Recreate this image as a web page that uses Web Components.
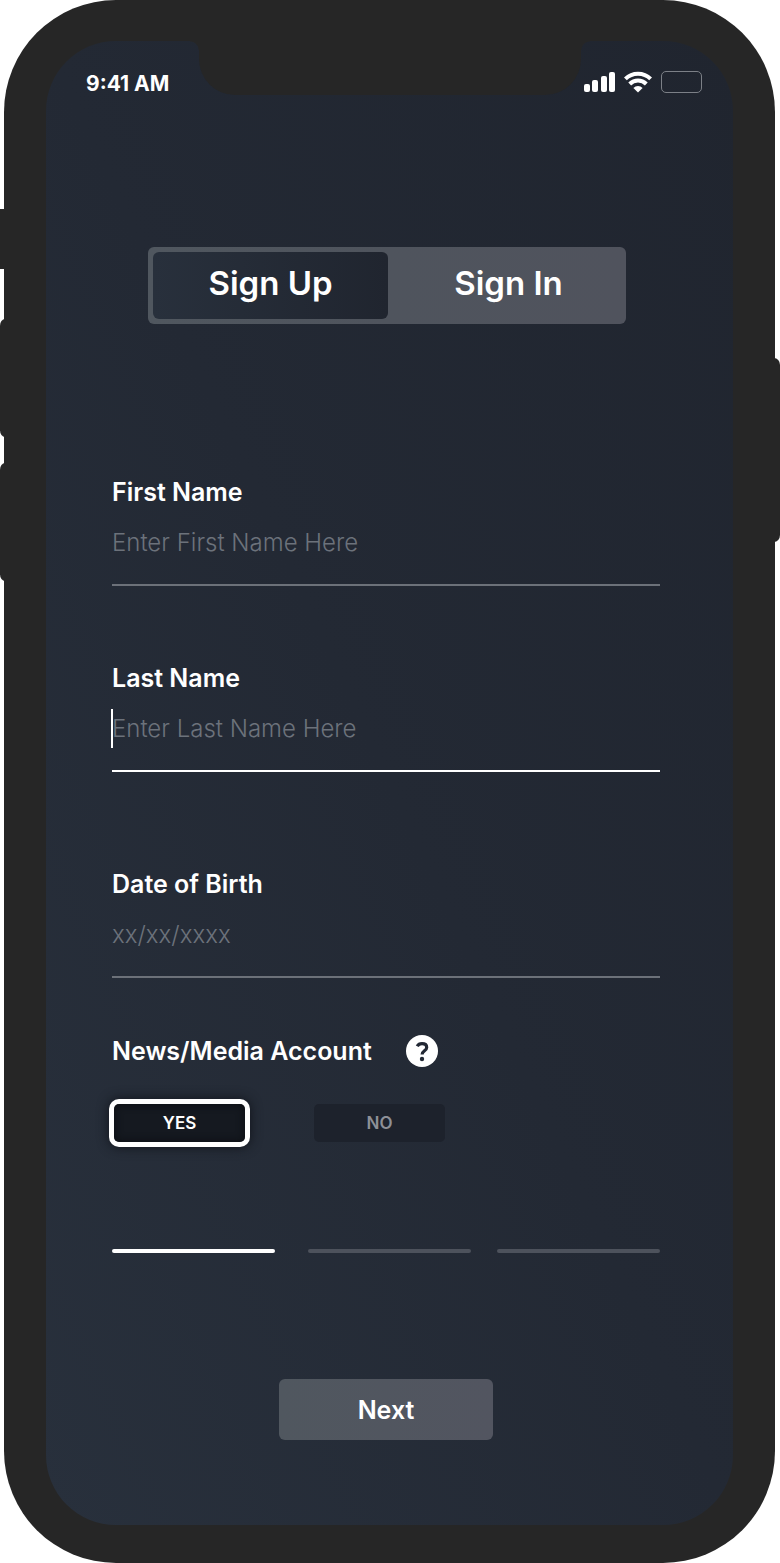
<!DOCTYPE html>
<html lang="en">
<head>
<meta charset="utf-8">
<meta name="viewport" content="width=device-width, initial-scale=1">
<title>Sign Up</title>
<style>
  body {
    margin: 0;
    background-color: #ffffff;
    color: #ffffff;
    font-family: Inter, "Liberation Sans", sans-serif;
  }
</style>
</head>
<body>
<phone-frame>
  <status-bar slot="status" time="9:41 AM"></status-bar>
  <sign-up-form></sign-up-form>
</phone-frame>

<script>
class PhoneFrame extends HTMLElement {
  constructor() {
    super();
    this.shadowDOM = this.attachShadow({mode: 'open'});
  }

  connectedCallback() {
    this.render();
  }

  render() {
    this.shadowDOM.innerHTML = `
    <style>
      * {
        box-sizing: border-box;
      }
      :host {
        display: block;
        position: relative;
        margin: 0 5px 0 4px;
        padding: 41px 42px 38px;
        border-radius: 112px;
        background-color: #262626;
      }

      .screen {
        position: relative;
        border-radius: 70px;
        background: linear-gradient(to top right, #28303c, #232934 50%, #20252f);
      }

      /* notch with rounded outer shoulders */
      .notch {
        position: absolute;
        top: 0;
        left: 50%;
        width: 382px;
        height: 54px;
        margin-left: -191px;
        border-radius: 0 0 36px 36px;
        background-color: #262626;
      }
      .notch::before,
      .notch::after {
        content: "";
        position: absolute;
        top: 0;
        width: 9px;
        height: 9px;
      }
      .notch::before {
        left: -9px;
        background: radial-gradient(circle at 0 100%, transparent 8px, #262626 9px);
      }
      .notch::after {
        right: -9px;
        background: radial-gradient(circle at 100% 100%, transparent 8px, #262626 9px);
      }

      /* side keys, over the page edge */
      .key {
        position: absolute;
        left: -4px;
        width: 5px;
        border-radius: 6px 0 0 6px / 8px 0 0 8px;
        background-color: #262626;
      }
      .mute { top: 209px; height: 60px; border-radius: 0; }
      .up { top: 319px; height: 118px; }
      .down { top: 463px; height: 118px; }
      .power {
        left: auto;
        right: -5px;
        top: 358px;
        width: 6px;
        height: 184px;
        border-radius: 0 6px 6px 0 / 0 7px 7px 0;
      }
    </style>

    <div class="key mute"></div>
    <div class="key up"></div>
    <div class="key down"></div>
    <div class="key power"></div>
    <div class="screen">
      <div class="notch"></div>
      <slot name="status"></slot>
      <slot></slot>
    </div>
    `;
  }
}

customElements.define('phone-frame', PhoneFrame);

class StatusBar extends HTMLElement {
  constructor() {
    super();
    this.shadowDOM = this.attachShadow({mode: 'open'});
  }

  connectedCallback() {
    this.render();
  }

  render() {
    this.shadowDOM.innerHTML = `
    <style>
      :host {
        display: flex;
        align-items: center;
        justify-content: space-between;
        height: 30px;
        padding: 28px 31px 0 40px;
        font-size: 21px;
        font-weight: 700;
        line-height: 30px;
      }
      .icons {
        display: flex;
        align-items: center;
        gap: 9px;
        padding-bottom: 4px;
      }
      svg {
        display: block;
      }
    </style>

    <span>${this.getAttribute('time')}</span>
    <div class="icons">
      <svg width="31" height="22" viewBox="0 0 31 22" fill="#ffffff">
        <rect x="0" y="13" width="6" height="8" rx="2"/>
        <rect x="8" y="9" width="6" height="12" rx="2"/>
        <rect x="17" y="5" width="6" height="16" rx="2"/>
        <rect x="25" y="1" width="6" height="20" rx="2"/>
      </svg>
      <svg width="28" height="22" viewBox="0 0 28 22" fill="none" stroke="#ffffff" stroke-width="4">
        <path d="M1.4 7.9a18 18 0 0 1 25.2 0"/>
        <path d="M5.7 13a11.8 11.8 0 0 1 16.6 0"/>
        <path d="M9.4 17a6.5 6.5 0 0 1 9.2 0L14 21.5Z" fill="#ffffff" stroke="none"/>
      </svg>
      <svg width="41" height="22" viewBox="0 0 41 22" fill="none" stroke="#7c8087">
        <rect x="0.5" y="0.5" width="40" height="21" rx="4.5"/>
      </svg>
    </div>
    `;
  }
}

customElements.define('status-bar', StatusBar);

class TabSwitch extends HTMLElement {
  constructor() {
    super();
    this.shadowDOM = this.attachShadow({mode: 'open'});
  }

  connectedCallback() {
    this.render();
  }

  _handleClick = (event) => {
    this.shadowDOM.querySelectorAll('button').forEach((button) => {
      button.setAttribute('aria-selected', button === event.currentTarget);
    });
  }

  render() {
    this.shadowDOM.innerHTML = `
    <style>
      :host {
        display: flex;
        gap: 3px;
        padding: 5px 0 5px 5px;
        border-radius: 6px;
        background: linear-gradient(to right, #50575f, #4f545d 50%, #50535d);
      }
      button {
        flex: 1;
        height: 67px;
        margin: 0;
        padding: 0 0 6px;
        border: none;
        border-radius: 6px;
        background: none;
        color: inherit;
        font: 600 33px/40px Inter, "Liberation Sans", sans-serif;
      }
      button[aria-selected="true"] {
        background: linear-gradient(to right, #28303c, #20252f);
      }
    </style>

    <button type="button" role="tab" aria-selected="true">Sign Up</button>
    <button type="button" role="tab" aria-selected="false">Sign In</button>
    `;

    this.shadowDOM.querySelectorAll('button').forEach((button) => {
      button.addEventListener('click', this._handleClick);
    });
  }
}

customElements.define('tab-switch', TabSwitch);

class FormField extends HTMLElement {
  constructor() {
    super();
    this.shadowDOM = this.attachShadow({mode: 'open'});
  }

  connectedCallback() {
    this.render();
  }

  get value() {
    return this.shadowDOM.querySelector('#field').value;
  }

  render() {
    this.shadowDOM.innerHTML = `
    <style>
      :host {
        display: block;
      }
      label {
        display: block;
        font-size: 25px;
        font-weight: 600;
        line-height: 32px;
      }
      .box {
        position: relative;
        padding: 16px 0 22px;
        border-bottom: 2px solid #6c7179;
      }
      input {
        display: block;
        box-sizing: border-box;
        width: 100%;
        height: 38px;
        margin: 0;
        padding: 0;
        border: none;
        outline: none;
        background: none;
        color: inherit;
        font: 300 24px/38px Inter, "Liberation Sans", sans-serif;
      }
      input::placeholder {
        color: #6c727b;
        opacity: 1;
      }
      :host([active]) .box {
        border-color: #ffffff;
      }
      :host([active]) .box::before {
        content: "";
        position: absolute;
        left: -1px;
        top: 15px;
        width: 2px;
        height: 39px;
        background-color: #ffffff;
      }
    </style>

    <label for="field">${this.getAttribute('label')}</label>
    <div class="box">
      <input id="field" type="text" placeholder="${this.getAttribute('hint')}">
    </div>
    `;
  }
}

customElements.define('form-field', FormField);

class YesNo extends HTMLElement {
  constructor() {
    super();
    this.shadowDOM = this.attachShadow({mode: 'open'});
  }

  connectedCallback() {
    this.render();
  }

  render() {
    this.shadowDOM.innerHTML = `
    <style>
      :host {
        display: block;
      }
      .head {
        display: flex;
        align-items: center;
        gap: 34px;
        font-size: 25px;
        font-weight: 600;
        line-height: 32px;
      }
      .help {
        width: 32px;
        height: 32px;
        padding: 0;
        border: none;
        background: none;
      }
      .help svg {
        display: block;
      }
      .choices {
        display: flex;
        gap: 69px;
        padding: 37px 0 0 2px;
      }
      label {
        display: grid;
        align-items: center;
        justify-items: center;
        width: 131px;
        height: 38px;
        color: #8d9097;
        font-size: 17px;
        font-weight: 600;
        line-height: 22px;
      }
      label > * {
        grid-area: 1 / 1;
      }
      input {
        appearance: none;
        width: 100%;
        height: 100%;
        margin: 0;
        border-radius: 5px;
        background-color: #1d222c;
      }
      span {
        z-index: 1;
      }
      input:checked {
        background-color: #151920;
        box-shadow: 0 0 0 5px #ffffff, 0 0 12px 5px #10131a, inset 0 0 8px #0b0d11;
      }
      input:checked + span {
        color: #ffffff;
      }
    </style>

    <div class="head">
      <div id="title">${this.getAttribute('label')}</div>
      <button class="help" type="button" aria-label="Help">
        <svg width="32" height="32" viewBox="0 0 32 32">
          <circle cx="16" cy="16" r="16" fill="#ffffff"/>
          <path d="M11.2 11.3C12.2 9.5 13.9 8.7 16 8.7c2.8 0 4.7 1.5 4.7 3.8 0 3.2-4.6 3.5-4.6 7" fill="none" stroke="#222834" stroke-width="3.2"/>
          <circle cx="16" cy="24" r="2.2" fill="#222834"/>
        </svg>
      </button>
    </div>
    <div class="choices" role="radiogroup" aria-labelledby="title">
      <label><input type="radio" name="media" value="yes" checked><span>YES</span></label>
      <label><input type="radio" name="media" value="no"><span>NO</span></label>
    </div>
    `;
  }
}

customElements.define('yes-no', YesNo);

class StepBar extends HTMLElement {
  constructor() {
    super();
    this.shadowDOM = this.attachShadow({mode: 'open'});
  }

  connectedCallback() {
    this.render();
  }

  render() {
    this.shadowDOM.innerHTML = `
    <style>
      :host {
        display: grid;
        grid-template-columns: 1fr 33px 1fr 26px 1fr;
      }
      i {
        height: 4px;
        border-radius: 2px;
        background-color: #4d525c;
      }
      i:nth-of-type(1) { grid-column: 1; background-color: #ffffff; }
      i:nth-of-type(2) { grid-column: 3; }
      i:nth-of-type(3) { grid-column: 5; }
    </style>

    <i></i><i></i><i></i>
    `;
  }
}

customElements.define('step-bar', StepBar);

class SignUpForm extends HTMLElement {
  constructor() {
    super();
    this.shadowDOM = this.attachShadow({mode: 'open'});
  }

  connectedCallback() {
    this.render();
  }

  render() {
    this.shadowDOM.innerHTML = `
    <style>
      :host {
        display: block;
        padding: 148px 73px 85px 66px;
      }
      form {
        display: flex;
        flex-direction: column;
      }
      tab-switch {
        margin: 0 34px 152px 36px;
      }
      form-field {
        margin-bottom: 76px;
      }
      .birth {
        margin: 20px 0 57px;
      }
      step-bar {
        margin: 107px 0 126px;
      }
      .next {
        align-self: center;
        width: 214px;
        height: 61px;
        padding: 0;
        border: none;
        border-radius: 6px;
        background: linear-gradient(to right, #50575f, #525560);
        color: inherit;
        font: 600 25px/32px Inter, "Liberation Sans", sans-serif;
      }
    </style>

    <form>
      <tab-switch></tab-switch>
      <form-field label="First Name" hint="Enter First Name Here"></form-field>
      <form-field label="Last Name" hint="Enter Last Name Here" active></form-field>
      <form-field class="birth" label="Date of Birth" hint="xx/xx/xxxx"></form-field>
      <yes-no label="News/Media Account"></yes-no>
      <step-bar></step-bar>
      <button class="next" type="button">Next</button>
    </form>
    `;
  }
}

customElements.define('sign-up-form', SignUpForm);
</script>
</body>
</html>
